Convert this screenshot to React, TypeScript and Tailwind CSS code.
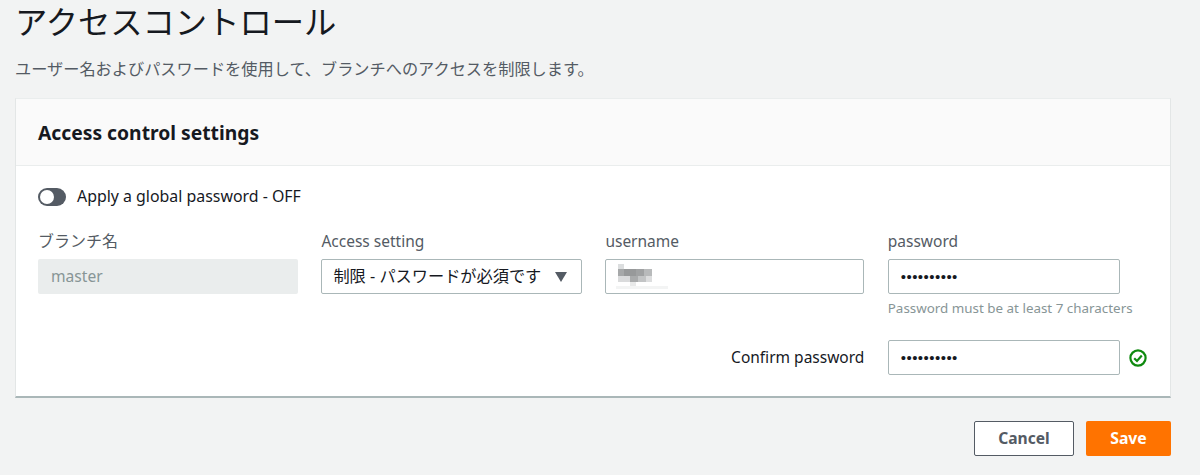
const FONT = "font-['Noto_Sans','Noto_Sans_CJK_JP',sans-serif]";

function Blurred() {
  // mosaic over the username
  const cells = [
    [6, 0, 6, 5, '#dcdedf'],
    [6, 5, 6, 7, '#a6a8a9'],
    [12, 5, 12, 7, '#97999a'],
    [24, 5, 8, 7, '#a0a2a3'],
    [32, 5, 8, 7, '#b8babb'],
    [6, 12, 12, 6, '#dadbdc'],
    [18, 12, 8, 6, '#a9abac'],
    [26, 12, 8, 6, '#c2c4c5'],
    [34, 12, 6, 6, '#dcdddE'],
    [18, 18, 6, 4, '#e8e9e9'],
    [4, 22, 52, 3, '#f3f4f4'],
  ] as const;
  return (
    <svg width="60" height="26" viewBox="0 0 60 26" className="shrink-0">
      {cells.map(([x, y, w, h, c], i) => (
        <rect key={i} x={x} y={y} width={w} height={h} fill={c} />
      ))}
    </svg>
  );
}

function Dots() {
  return <span className="text-[#16191f] text-[15px] leading-none tracking-[0.45px] font-['Liberation_Sans',sans-serif]">••••••••••</span>;
}

function CheckCircle() {
  return (
    <svg width="18" height="18" viewBox="0 0 18 18" fill="none" stroke="#0f8a0f" strokeWidth="2.2" className="shrink-0">
      <circle cx="9" cy="9" r="7.6" />
      <path d="M5.2 9.2l2.8 2.8 4.8-5.4" />
    </svg>
  );
}

const inputBox = 'flex h-[35px] items-center rounded-[2px] border border-[#aab7b8] bg-white';
const fieldLabel = 'block h-[29px] text-[15.5px] leading-[23px] text-[#545b64]';

export default function App() {
  return (
    <div className={`${FONT} h-[475px] w-[1200px] overflow-hidden bg-[#f2f3f3] pl-[15px] pr-[29px]`}>
      <h1 className="h-[44px] text-[32.3px] leading-[43px] font-normal text-[#16191f] mb-[14px]">アクセスコントロール</h1>
      <p className="h-[22px] text-[16.2px] leading-[22px] text-[#545b64] mb-[18px]">ユーザー名およびパスワードを使用して、ブランチへのアクセスを制限します。</p>

      <section className="h-[300px] bg-white border-l border-r border-[#e3e6e6] border-b-2 border-b-[#aab7b8] border-t border-t-[#eaeded]">
        <div className="flex h-[67px] items-center border-b border-[#eaeded] bg-[#fafafa] pl-[22px] pt-[2px]">
          <h2 className="text-[19.3px] font-bold text-[#16191f]">Access control settings</h2>
        </div>

        <div className="pl-[22px] pr-[24px]">
          <div className="flex h-[64px] items-center gap-[11px] pb-[3px]">
            <span className="flex h-[18px] w-[28px] items-center rounded-full bg-[#545b64] pl-[2px]">
              <span className="h-[14px] w-[14px] rounded-full bg-white" />
            </span>
            <span className="text-[15.9px] text-[#16191f]">Apply a global password - OFF</span>
          </div>

          <div className="grid grid-cols-[260px_260.6px_259px_232px_auto] gap-x-[23.4px]">
            <div>
              <label className="block h-[29px] text-[16px] leading-[23px] text-[#545b64]">ブランチ名</label>
              <div className="flex h-[35px] items-center rounded-[2px] bg-[#eaeded] pl-[13px] text-[15.6px] text-[#879596]">master</div>
            </div>
            <div>
              <label className={fieldLabel}>Access setting</label>
              <div className={`${inputBox} justify-between pl-[11px] pr-[14px] text-[16.2px] text-[#16191f]`}>
                <span className="whitespace-nowrap">制限 - パスワードが必須です</span>
                <svg width="12" height="10" viewBox="0 0 12 10" className="shrink-0"><path d="M0 0h12L6 10z" fill="#545b64" /></svg>
              </div>
            </div>
            <div>
              <label className={fieldLabel}>username</label>
              <div className={`${inputBox} pl-[6px]`}><Blurred /></div>
            </div>
            <div>
              <label className={fieldLabel}>password</label>
              <div className={`${inputBox} pl-[12px]`}><Dots /></div>
              <p className="mt-[4px] h-[24px] whitespace-nowrap text-[13.4px] leading-[20px] text-[#879596]">Password must be at least 7 characters</p>
            </div>
            <div />

            <div className="col-span-3 flex h-[35px] items-center justify-end mt-[18px]">
              <span className="text-[15.5px] text-[#16191f]">Confirm password</span>
            </div>
            <div className="mt-[18px]">
              <div className={`${inputBox} pl-[12px]`}><Dots /></div>
            </div>
            <div className="-ml-[14px] mt-[18px] flex h-[35px] items-center"><CheckCircle /></div>
          </div>
        </div>
      </section>

      <div className="flex justify-end gap-[12px] mt-[23px]">
        <button className="h-[35px] w-[100px] rounded-[2px] border border-[#545b64] bg-white text-[15.6px] font-bold text-[#545b64]">Cancel</button>
        <button className="h-[35px] w-[85px] rounded-[2px] bg-[#ff7300] text-[15.8px] font-bold text-white">Save</button>
      </div>
    </div>
  );
}
